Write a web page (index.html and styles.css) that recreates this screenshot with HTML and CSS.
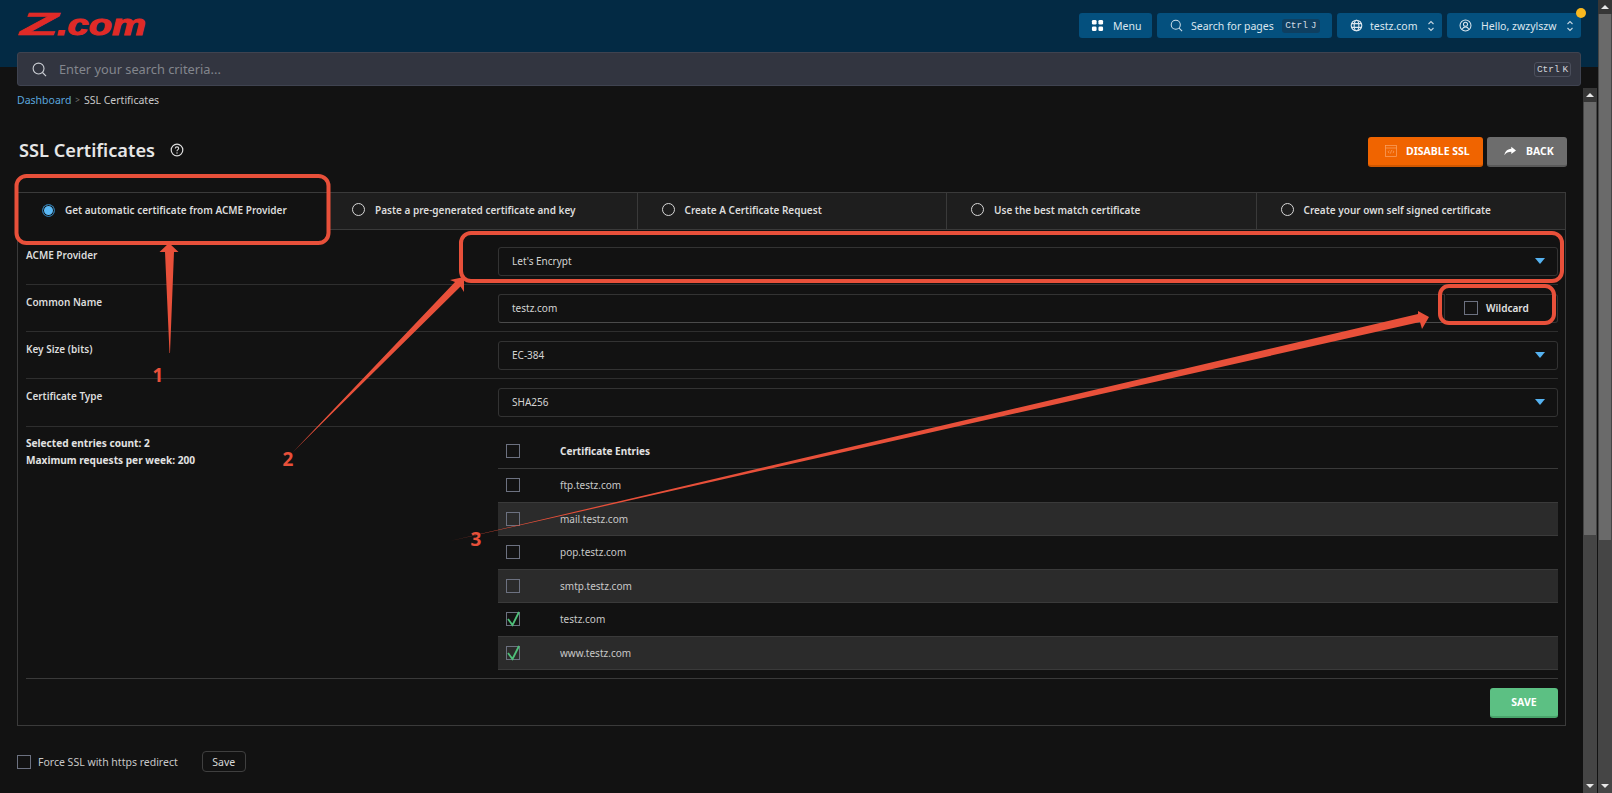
FILE: index.html
```html
<!DOCTYPE html>
<html lang="en">
<head>
<meta charset="utf-8">
<title>SSL Certificates</title>
<link rel="stylesheet" href="styles.css">
</head>
<body>
<div class="page">
  <div class="app">
    <header class="header">
      <div class="topline">
        <svg class="logo" width="130" height="26" viewBox="0 0 130 26" role="img" aria-label="Z.com">
          <text class="logo-z" x="1" y="22" textLength="38" lengthAdjust="spacingAndGlyphs">Z</text>
          <text class="logo-rest" x="38" y="22" textLength="89" lengthAdjust="spacingAndGlyphs">.com</text>
        </svg>
        <nav class="topnav">
          <button class="navbtn nav-menu">
            <svg class="ico" viewBox="0 0 14 14"><g fill="#fff"><rect x="1" y="1" width="5" height="5" rx="1.5"/><rect x="8" y="1" width="5" height="5" rx="1.5"/><rect x="1" y="8" width="5" height="5" rx="1.5"/><rect x="8" y="8" width="5" height="5" rx="1.5"/></g></svg>
            <span>Menu</span>
          </button>
          <button class="navbtn nav-search">
            <svg class="ico" viewBox="0 0 14 14"><g fill="none" stroke="#cfe0ea" stroke-width="1.1"><circle cx="6.2" cy="6.2" r="4.9"/><path d="M9.8 9.8 13 13"/></g></svg>
            <span>Search for pages</span>
            <kbd class="kbd kbd-dark">Ctrl J</kbd>
          </button>
          <button class="navbtn nav-site">
            <svg class="ico" viewBox="0 0 14 14"><g fill="none" stroke="#dbe6ee" stroke-width="1.2"><circle cx="7" cy="7" r="5.7"/><ellipse cx="7" cy="7" rx="2.5" ry="5.7"/><path d="M1.6 5h10.8M1.6 9h10.8"/></g></svg>
            <span>testz.com</span>
            <svg class="updown" viewBox="0 0 8 12"><path d="M1.5 4 4 1.5 6.500 4M1.500 8 4 10.500 6.500 8" fill="none" stroke="#c5d5df" stroke-width="1.1"/></svg>
          </button>
          <button class="navbtn nav-user">
            <svg class="ico" viewBox="0 0 14 14"><g fill="none" stroke="#dbe6ee" stroke-width="1.1"><circle cx="7" cy="7" r="5.9"/><circle cx="7" cy="5.700" r="2.200"/><path d="M3.500 11c.8-1.800 2-2.300 3.500-2.300s2.700.5 3.500 2.300"/></g></svg>
            <span>Hello, zwzylszw</span>
            <svg class="updown" viewBox="0 0 8 12"><path d="M1.5 4 4 1.5 6.500 4M1.500 8 4 10.500 6.500 8" fill="none" stroke="#c5d5df" stroke-width="1.1"/></svg>
            <i class="dot"></i>
          </button>
        </nav>
      </div>
      <div class="searchbar">
        <svg class="search-ico" viewBox="0 0 16 16"><g fill="none" stroke="#c9ccd2" stroke-width="1.200"><circle cx="7" cy="7" r="5.800"/><path d="M11.200 11.200 15 15"/></g></svg>
        <span class="placeholder">Enter your search criteria...</span>
        <kbd class="kbd kbd-line">Ctrl K</kbd>
      </div>
    </header>

    <div class="body">
      <main class="main">
        <div class="crumbs"><a class="crumb-link">Dashboard</a><span class="crumb-sep">&gt;</span><span>SSL Certificates</span></div>
        <div class="titlebar">
          <h1 class="title">SSL Certificates</h1>
          <svg class="help" viewBox="0 0 14 14"><circle cx="7" cy="7" r="5.800" fill="none" stroke="#ddd" stroke-width="1.200"/><path d="M5.300 5.500c0-1 .8-1.600 1.700-1.600s1.700.6 1.700 1.500c0 1.300-1.700 1.300-1.700 2.800" fill="none" stroke="#ddd" stroke-width="1.100"/><circle cx="7" cy="10" r=".7" fill="#ddd"/></svg>
          <div class="actions">
            <button class="act act-orange">
              <svg class="act-ico" viewBox="0 0 14 14"><g fill="none" stroke="#f9a56b" stroke-width=".8"><rect x=".5" y=".5" width="13" height="13"/><path d="M.5 3.500h13M5 6.500 3.500 8 5 9.500M9 6.500 10.500 8 9 9.500M7.700 6 6.300 10"/></g></svg>
              <span>DISABLE SSL</span>
            </button>
            <button class="act act-gray">
              <svg class="act-ico" viewBox="0 0 14 12"><path d="M8.500 1 14 5.500 8.500 9.500V7C5 7 2.500 8 .5 11c.5-4 3-7 8-7.500z" fill="#fff"/></svg>
              <span>BACK</span>
            </button>
          </div>
        </div>

        <section class="panel">
          <div class="tabs">
            <div class="tab tab-active"><i class="radio radio-on"></i><span>Get automatic certificate from ACME Provider</span></div>
            <div class="tab"><i class="radio"></i><span>Paste a pre-generated certificate and key</span></div>
            <div class="tab"><i class="radio"></i><span>Create A Certificate Request</span></div>
            <div class="tab"><i class="radio"></i><span>Use the best match certificate</span></div>
            <div class="tab"><i class="radio"></i><span>Create your own self signed certificate</span></div>
          </div>
          <div class="form">
            <div class="row row-first">
              <label class="label">ACME Provider</label>
              <div class="field select"><span>Let's Encrypt</span><i class="caret"></i></div>
            </div>
            <div class="row">
              <label class="label">Common Name</label>
              <div class="group">
                <div class="field group-input"><span>testz.com</span></div>
                <div class="field group-addon"><i class="check"></i><span>Wildcard</span></div>
              </div>
            </div>
            <div class="row">
              <label class="label">Key Size (bits)</label>
              <div class="field select"><span>EC-384</span><i class="caret"></i></div>
            </div>
            <div class="row row-last">
              <label class="label">Certificate Type</label>
              <div class="field select"><span>SHA256</span><i class="caret"></i></div>
            </div>
            <div class="row row-entries">
              <div class="counts">
                <p>Selected entries count: 2</p>
                <p>Maximum requests per week: 200</p>
              </div>
              <div class="entries">
                <div class="entry entry-head"><i class="check"></i><span>Certificate Entries</span></div>
                <div class="entry"><i class="check"></i><span>ftp.testz.com</span></div>
                <div class="entry entry-alt"><i class="check"></i><span>mail.testz.com</span></div>
                <div class="entry"><i class="check"></i><span>pop.testz.com</span></div>
                <div class="entry entry-alt"><i class="check"></i><span>smtp.testz.com</span></div>
                <div class="entry"><i class="check"><svg viewBox="0 0 14 14"><path d="M2 7 6.500 13 13 0" fill="none" stroke="#4fc07a" stroke-width="1.800"/></svg></i><span>testz.com</span></div>
                <div class="entry entry-alt"><i class="check"><svg viewBox="0 0 14 14"><path d="M2 7 6.500 13 13 0" fill="none" stroke="#4fc07a" stroke-width="1.800"/></svg></i><span>www.testz.com</span></div>
              </div>
            </div>
            <div class="footer"><button class="save">SAVE</button></div>
          </div>
        </section>

        <div class="force">
          <i class="check"></i>
          <span class="force-text">Force SSL with https redirect</span>
          <button class="force-save">Save</button>
        </div>
      </main>
      <div class="scrollbar sb-inner">
        <div class="sb-cap"><i class="tri-up"></i></div>
        <div class="sb-track"><div class="sb-thumb thumb-inner"></div></div>
        <div class="sb-cap sb-cap-end"><i class="tri-down"></i></div>
      </div>
    </div>
  </div>
  <div class="scrollbar sb-outer">
    <div class="sb-cap"><i class="tri-up"></i></div>
    <div class="sb-track"><div class="sb-thumb thumb-outer"></div></div>
    <div class="sb-cap sb-cap-end"><i class="tri-down"></i></div>
  </div>

  <svg class="notes" width="1612" height="793" viewBox="0 0 1612 793">
    <g fill="none" stroke="#e8503a" stroke-width="4">
      <rect x="16.500" y="176" width="312" height="67" rx="10"/>
      <rect x="461" y="233" width="1101" height="48" rx="10"/>
      <rect x="1440" y="286" width="114" height="37" rx="9"/>
    </g>
    <g fill="#e8503a">
      <polygon points="169,243 178.500,252 174,252 170,353 169.500,353 165,252 159.500,252"/>
      <polygon points="464,277 464,292 460.500,286.500 293,452 455,282 450,280"/>
      <polygon points="1429,317 1422,329 1420,322 450,541 1418,314 1418,311"/>
      <text class="note-num" x="158" y="382">1</text>
      <text class="note-num" x="288" y="466">2</text>
      <text class="note-num" x="476" y="546">3</text>
    </g>
  </svg>
</div>
</body>
</html>
```
FILE: styles.css
```css
* { box-sizing: border-box; }
html, body { margin: 0; height: 100%; overflow: hidden; }
body {
  background: #121212;
  color: #e4e4e4;
  font-family: "Noto Sans", "Open Sans", sans-serif;
  font-size: 10px;
}
button { font: inherit; cursor: pointer; }
p { margin: 0; }

.page { position: relative; display: flex; width: 1612px; height: 793px; }
.app { width: 1598px; display: flex; flex-direction: column; }

/* header */
.header { height: 67px; background: #032a44; padding: 0 17px; position: relative; z-index: 2; }
.topline { height: 52px; display: flex; align-items: flex-start; justify-content: space-between; }
.logo { margin: 13px 0 0 2px; overflow: visible; }
.logo-z { font: italic 700 31px "Liberation Sans", sans-serif; fill: #e02a27; stroke: #e02a27; stroke-width: .6px; }
.logo-rest { font: italic 700 29px "Liberation Sans", sans-serif; fill: #e02a27; stroke: #e02a27; stroke-width: 1px; }
.topnav { display: flex; gap: 5px; margin-top: 13px; }
.navbtn {
  position: relative;
  height: 25px;
  display: flex;
  align-items: center;
  border: 0;
  border-radius: 3px;
  background: #04507e;
  color: #dbe6ee;
  font-size: 10.500px;
  white-space: nowrap;
  padding: 0;
}
.nav-menu { width: 73px; padding-left: 12px; gap: 9px; }
.nav-search { width: 175px; padding-left: 13px; gap: 8px; }
.nav-site { width: 105px; padding-left: 13px; gap: 7px; }
.nav-user { width: 134px; padding-left: 12px; gap: 9px; }
.ico { width: 13px; height: 13px; flex: none; }
.updown { width: 8px; height: 12px; margin-left: auto; margin-right: 7px; flex: none; }
.dot {
  position: absolute;
  top: -5px;
  right: -5px;
  width: 10px;
  height: 10px;
  border-radius: 50%;
  background: #f9b81f;
}
.kbd { font-family: "Liberation Mono", "DejaVu Sans Mono", monospace; font-size: 9.500px; font-style: normal; border-radius: 3px; white-space: nowrap; word-spacing: -3px; text-align: center; }
.kbd-dark { width: 38px; background: #0f3f60; color: #d0dce4; height: 14px; line-height: 14px; }
.kbd-line { width: 37px; height: 15px; border: 1px solid #4b4f5c; color: #d0d2d8; line-height: 13px; }

.searchbar {
  height: 34px;
  display: flex;
  align-items: center;
  background: #323540;
  border: 1px solid #3f4350;
  border-radius: 3px;
  padding: 0 9px 0 14px;
}
.search-ico { width: 15px; height: 15px; }
.placeholder { margin-left: 12px; font-size: 12.800px; color: #83868d; flex: 1; }

/* body */
.body { flex: 1; display: flex; min-height: 0; }
.main { width: 1583px; padding: 25px 17px 0; }
.crumbs { height: 16px; line-height: 16px; display: flex; font-size: 10.500px; color: #c8c8c8; }
.crumb-link { color: #5aa6dc; }
.crumb-sep { margin: 0 4px; color: #777; font-size: 8px; }

.titlebar { display: flex; align-items: center; height: 30px; margin-top: 29px; }
.title { margin: 0 0 4px 2px; font-size: 18.200px; font-weight: 600; color: #e6e6e6; }
.help { width: 14px; height: 14px; margin: 0 0 4px 15px; }
.actions { margin-left: auto; margin-right: -1px; display: flex; gap: 4px; }
.act {
  height: 30px;
  display: flex;
  align-items: center;
  border: 0;
  border-radius: 3px;
  color: #fff;
  font-size: 10.500px;
  font-weight: 700;
  padding: 0;
}
.act-orange { width: 115px; padding-left: 17px; gap: 9px; background: #f06400; border-bottom: 2px solid #cf5700; }
.act-gray { width: 80px; padding-left: 17px; gap: 10px; background: #6d6d6d; border-bottom: 2px solid #5a5a5a; }
.act-ico { width: 12px; height: 12px; }

/* panel */
.panel { width: 1549px; height: 534px; margin-top: 25px; border: 1px solid #3a3a3a; }
.tabs { display: grid; grid-template-columns: 309px repeat(4, 1fr); height: 37px; border-bottom: 1px solid #3a3a3a; }
.tab {
  display: flex;
  align-items: center;
  gap: 10px;
  padding: 0 0 3px 24px;
  background: #1e1e1e;
  border-left: 1px solid #3a3a3a;
  font-weight: 600;
  font-size: 10px;
  color: #dcdcdc;
}
.tab-active { background: #121212; border-left: 0; margin-bottom: -1px; }
.radio { width: 13px; height: 13px; border: 1.500px solid #d8d8d8; border-radius: 50%; flex: none; }
.radio-on { border-color: #2b6f9f; background: #5ab8f5; box-shadow: inset 0 0 0 1px #121212; }

.form { padding: 0 7px 0 8px; }
.row { display: flex; padding: 9px 0 8px; border-bottom: 1px solid #2e2e2e; }
.row-first { padding-top: 17px; }
.row-last { padding-bottom: 9px; }
.label { width: 472px; flex: none; font-weight: 600; font-size: 10px; color: #dcdcdc; line-height: 16px; }
.field {
  height: 29px;
  display: flex;
  align-items: center;
  border: 1px solid #333;
  border-radius: 3px;
  padding: 0 12px 1px 13px;
  color: #d4d4d4;
  font-size: 10px;
}
.select { flex: 1; justify-content: space-between; }
.caret { width: 0; height: 0; border: 5px solid transparent; border-top: 6px solid #55b2f0; border-bottom: 0; }
.group { flex: 1; display: flex; }
.group-input { flex: 1; border-right: 1px solid #333; border-radius: 3px 0 0 3px; border-bottom-color: #4a4a4a; }
.group-addon { width: 112px; margin-left: 1px; border-left: 0; border-radius: 0 3px 3px 0; padding-left: 18px; gap: 8px; font-weight: 600; color: #e2e2e2; }
.check { width: 14px; height: 14px; display: block; flex: none; border: 1px solid #6c7180; background: transparent; }
.check svg { display: block; width: 14px; height: 14px; margin: -1px; overflow: visible; }

.row-entries { padding: 7px 0 8px; border-bottom: 1px solid #3a3a3a; }
.counts { width: 472px; flex: none; padding-top: 1px; font-size: 10.100px; font-weight: 700; line-height: 17px; color: #e2e2e2; }
.entries { flex: 1; }
.entry { height: 33.500px; display: flex; align-items: center; padding-left: 8px; gap: 40px; color: #c8c8c8; font-size: 10px; }
.entry-head { height: 34.500px; border-bottom: 1px solid #3a3a3a; font-weight: 700; color: #e2e2e2; }
.entry-alt { background: #2b2b2b; border-top: 1px solid #3a3a3a; border-bottom: 1px solid #3a3a3a; }

.footer { display: flex; justify-content: flex-end; padding-top: 9px; }
.save {
  width: 68px;
  height: 30px;
  border: 0;
  border-bottom: 2px solid #49a56b;
  border-radius: 3px;
  background: #5cc083;
  color: #fff;
  font-size: 10.500px;
  font-weight: 700;
}

.force { display: flex; align-items: center; margin-top: 25px; height: 21px; }
.force-text { margin-left: 7px; color: #c8c8c8; font-size: 10.500px; }
.force-save {
  margin-left: 24px;
  width: 44px;
  height: 21px;
  background: transparent;
  border: 1px solid #3f3f3f;
  border-radius: 4px;
  color: #d8d8d8;
  font-size: 10.500px;
  padding: 0;
}

/* scrollbars */
.scrollbar { display: flex; flex-direction: column; width: 14px; background: #454545; }
.sb-inner { margin-top: 21px; }
.sb-outer { height: 793px; }
.sb-cap { height: 14px; flex: none; background: #363636; display: flex; align-items: center; justify-content: center; }
.sb-cap-end { background: #454545; }
.sb-track { flex: 1; }
.sb-thumb { margin: 0 1px; background: #6a6a6a; }
.thumb-inner { height: 433px; }
.thumb-outer { height: 526px; }
.tri-up { width: 0; height: 0; border: 4px solid transparent; border-top: 0; border-bottom: 4px solid #e8e8e8; }
.tri-down { width: 0; height: 0; border: 4px solid transparent; border-bottom: 0; border-top: 4px solid #e8e8e8; }

/* annotation layer */
.notes { position: absolute; left: 0; top: 0; pointer-events: none; z-index: 5; }
.note-num { font: 700 19px "Noto Sans", sans-serif; text-anchor: middle; }
```
